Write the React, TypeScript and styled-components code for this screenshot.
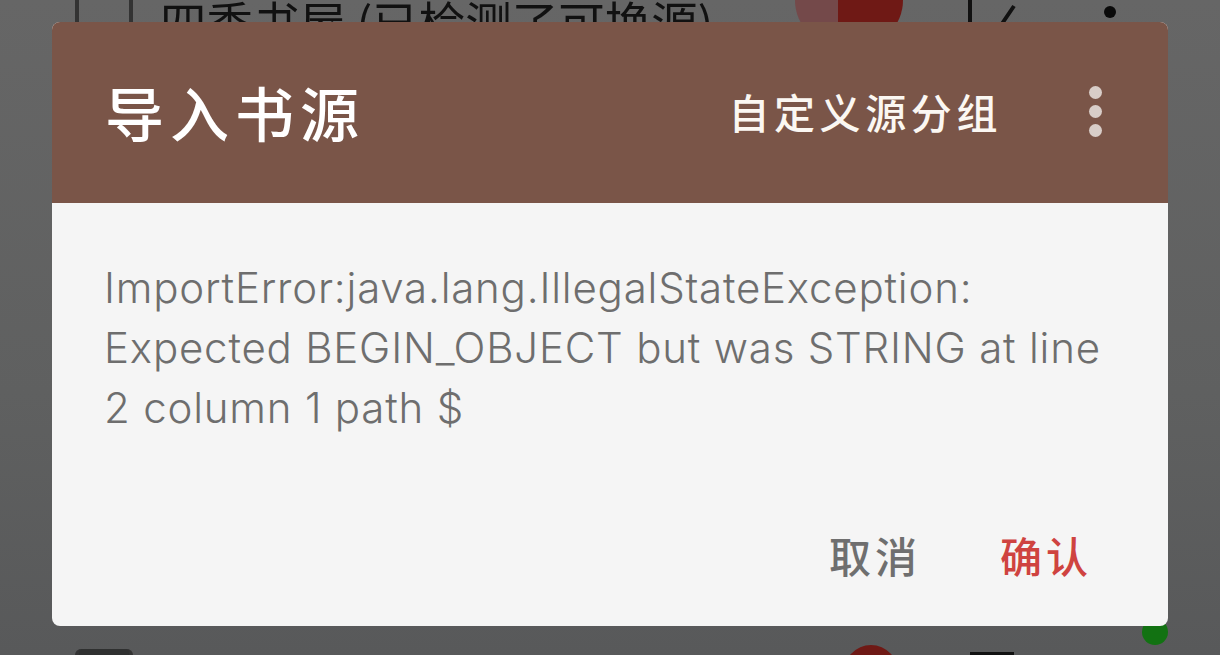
import React from 'react'
import styled, { createGlobalStyle } from 'styled-components'

const GlobalStyle = createGlobalStyle`
  html, body {
    margin: 0;
    padding: 0;
    background: #606162;
  }
  body {
    font-family: Inter, "Noto Sans CJK SC", sans-serif;
  }
`

const Screen = styled.div`
  position: relative;
  width: 1220px;
  height: 655px;
  overflow: hidden;
  display: flex;
  flex-direction: column;
  justify-content: space-between;
  background: linear-gradient(180deg, #666 0%, #5f6060 60%, #58595a 100%);
`

const ListRow = styled.div<{ $bottom?: boolean }>`
  height: ${props => (props.$bottom ? 10 : 48)}px;
  overflow: hidden;
  display: flex;
  align-items: ${props => (props.$bottom ? 'flex-start' : 'flex-end')};
  padding-left: 75px;
  filter: blur(0.6px);
`

const Checkbox = styled.div<{ $filled?: boolean }>`
  flex: 0 0 58px;
  height: ${props => (props.$filled ? 10 : 48)}px;
  margin-top: ${props => (props.$filled ? 4 : 0)}px;
  box-sizing: border-box;
  border: solid #333;
  border-width: 0 4px;
  border-radius: ${props => (props.$filled ? '6px 6px 0 0' : 0)};
  background: ${props => (props.$filled ? '#2f3030' : 'transparent')};
`

const SourceName = styled.div`
  flex: 0 0 auto;
  width: 635px;
  margin-left: 27px;
  font-family: "Noto Sans CJK SC", sans-serif;
  font-size: 46.5px;
  line-height: 48px;
  height: 48px;
  white-space: nowrap;
  color: #111;
  transform: translateY(-3px);
`

const Toggle = styled.div`
  flex: 0 0 108px;
  height: 48px;
  display: flex;
  border-radius: 0 0 54px 54px;
  overflow: hidden;
`

const ToggleTrack = styled.div`
  flex: 0 0 43px;
  background: #74494a;
`

const ToggleKnob = styled.div`
  flex: 1;
  background: #6f1915;
`

const Tools = styled.div`
  flex: 0 0 auto;
  margin-left: 65px;
  height: 48px;
  display: flex;
  align-items: flex-end;
`

const ToolIcon = styled.svg`
  display: block;
  width: 170px;
  height: 48px;
`

const BottomKnob = styled.div`
  flex: 0 0 56px;
  height: 60px;
  margin-left: 710px;
  border-radius: 50%;
  background: #6f1915;
`

const BottomEdit = styled.div`
  flex: 0 0 44px;
  height: 10px;
  margin: 7px 0 0 71px;
  background: #111;
`

const StatusDot = styled.div`
  position: absolute;
  left: 1142px;
  top: 619px;
  width: 26px;
  height: 26px;
  border-radius: 50%;
  background: #127212;
`

const Dialog = styled.div`
  position: absolute;
  left: 52px;
  top: 22px;
  width: 1116px;
  height: 604px;
  border-radius: 8px;
  overflow: hidden;
  display: flex;
  flex-direction: column;
  background: #f5f5f5;
`

const Header = styled.div`
  position: relative;
  flex: 0 0 181px;
  display: flex;
  align-items: center;
  padding: 0 53px;
  background: #7a5548;
  color: #fff;
`

const Title = styled.h1`
  flex: 1;
  margin: 0;
  font-family: "Noto Sans CJK SC", sans-serif;
  font-size: 59px;
  font-weight: 500;
  letter-spacing: 6px;
  line-height: 80px;
  transform: translateY(-1px);
`

const GroupAction = styled.div`
  font-family: "Noto Sans CJK SC", sans-serif;
  font-size: 41px;
  font-weight: 500;
  letter-spacing: 4.6px;
  line-height: 60px;
  color: #fbf7f2;
  margin-right: 113px;
  transform: translateY(-2px);
`

const MoreButton = styled.div`
  position: absolute;
  left: 1037px;
  top: 64px;
  display: flex;
  flex-direction: column;
  gap: 6px;
`

const MoreDot = styled.span`
  display: block;
  width: 13px;
  height: 13px;
  border-radius: 50%;
  background: #d8cdc8;
`

const Body = styled.div`
  flex: 1;
  padding: 55px 52px 0;
  font-size: 42px;
  font-weight: 300;
  letter-spacing: 0.8px;
  line-height: 60px;
  white-space: nowrap;
  color: #6e6e6e;
`

const Actions = styled.div`
  flex: 0 0 auto;
  display: flex;
  justify-content: flex-end;
  gap: 79px;
  padding: 0 76px 41px 0;
`

const ActionButton = styled.button<{ $primary?: boolean }>`
  border: 0;
  padding: 0;
  background: none;
  font-family: "Noto Sans CJK SC", sans-serif;
  font-size: 42px;
  font-weight: 500;
  letter-spacing: 4px;
  line-height: 60px;
  color: ${props => (props.$primary ? '#cf4340' : '#6f6f6f')};
`

const App = () => {
  return (
    <Screen>
      <GlobalStyle />
      <ListRow>
        <Checkbox />
        <SourceName>四季书屋 (已检测了可换源)</SourceName>
        <Toggle>
          <ToggleTrack />
          <ToggleKnob />
        </Toggle>
        <Tools>
          <ToolIcon viewBox="0 0 170 48">
            <path d="M2 0V48" stroke="#111" strokeWidth="4" fill="none" />
            <path d="M27 34L46 6M32 46L38 36" stroke="#111" strokeWidth="4" fill="none" />
            <circle cx="142" cy="12" r="6" fill="#0a0a0a" />
          </ToolIcon>
        </Tools>
      </ListRow>
      <ListRow $bottom>
        <Checkbox $filled />
        <BottomKnob />
        <BottomEdit />
      </ListRow>
      <StatusDot />
      <Dialog>
        <Header>
          <Title>导入书源</Title>
          <GroupAction>自定义源分组</GroupAction>
          <MoreButton>
            <MoreDot />
            <MoreDot />
            <MoreDot />
          </MoreButton>
        </Header>
        <Body>
          ImportError:java.lang.IllegalStateException:
          <br />
          Expected BEGIN_OBJECT but was STRING at line
          <br />
          2 column 1 path $
        </Body>
        <Actions>
          <ActionButton>取消</ActionButton>
          <ActionButton $primary>确认</ActionButton>
        </Actions>
      </Dialog>
    </Screen>
  )
}

export default App
